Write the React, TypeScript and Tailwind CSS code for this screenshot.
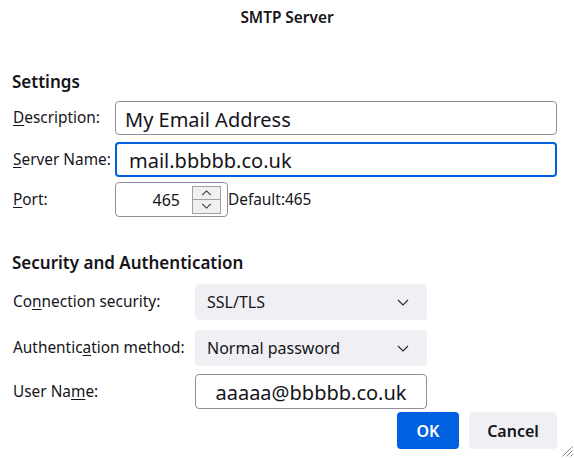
import React from "react";

function Chevron({ up = false, className = "" }: { up?: boolean; className?: string }) {
  return (
    <svg viewBox="0 0 12 7" className={className} fill="none" stroke="currentColor" strokeWidth={1.2}>
      {up ? <path d="M1 6 6 1l5 5" /> : <path d="M1 1l5 5 5-5" />}
    </svg>
  );
}

function Label({ text, u, className = "" }: { text: string; u: number; className?: string }) {
  return (
    <span className={`text-[15.4px] ${className}`}>
      {text.slice(0, u)}
      <span className="underline underline-offset-2">{text[u]}</span>
      {text.slice(u + 1)}
    </span>
  );
}

function Select({ value }: { value: string }) {
  return (
    <div className="flex h-[36px] w-[232px] items-center justify-between rounded-[4px] bg-[#f0f0f4] pl-[12px] pr-[18px] text-[16px]">
      <span>{value}</span>
      <Chevron className="h-[7px] w-[12px] text-[#2b2a33]" />
    </div>
  );
}

export default function App() {
  return (
    <div
      className="relative h-[458px] w-[574px] overflow-hidden bg-white text-[#15141a]"
      style={{ fontFamily: '"Noto Sans", "Open Sans", sans-serif' }}
    >
      <div className="flex h-[36px] items-center justify-center text-[15.4px] font-semibold">SMTP Server</div>

      <div className="px-[12px]">
        <h2 className="mt-[35px] text-[17px] leading-[22px] font-semibold">Settings</h2>

        <div className="mt-[8px] flex flex-col">
          <div className="flex items-center">
            <Label text="Description:" u={0} className="w-[103px] pl-[1px]" />
            <div className="mr-[5px] flex h-[34px] flex-1 items-center rounded-[4px] border border-[#8f8f9d] px-[9px] pt-[4px] text-[20px]">
              My Email Address
            </div>
          </div>
          <div className="mt-[7px] flex items-center">
            <Label text="Server Name:" u={0} className="w-[103px] pl-[1px]" />
            <div className="mr-[5px] flex h-[35px] flex-1 items-center rounded-[4px] border-2 border-[#0061e0] px-[12px] pt-[3px] text-[20px]">
              mail.bbbbb.co.uk
            </div>
          </div>
          <div className="mt-[5px] flex items-center">
            <Label text="Port:" u={0} className="w-[103px] pl-[1px]" />
            <div className="flex h-[35px] w-[113px] items-center justify-end rounded-[4px] border border-[#8f8f9d] pr-[6px]">
              <span className="mr-[12px] text-[16px]">465</span>
              <div className="flex h-[28px] w-[29px] flex-col border border-[#a0a0a0] bg-[#f0f0f0] text-[#333]">
                <div className="flex flex-1 items-center justify-center border-b border-[#a0a0a0]">
                  <Chevron up className="h-[6px] w-[11px]" />
                </div>
                <div className="flex flex-1 items-center justify-center">
                  <Chevron className="h-[6px] w-[11px]" />
                </div>
              </div>
            </div>
            <span className="text-[15.4px]">Default:465</span>
          </div>
        </div>

        <h2 className="mt-[35px] text-[17px] leading-[22px] font-semibold">Security and Authentication</h2>

        <div className="mt-[10px] flex flex-col">
          <div className="flex items-center">
            <Label text="Connection security:" u={2} className="w-[183px] pl-[1px]" />
            <Select value="SSL/TLS" />
          </div>
          <div className="mt-[10px] flex items-center">
            <Label text="Authentication method:" u={9} className="w-[183px] pl-[1px]" />
            <Select value="Normal password" />
          </div>
          <div className="mt-[8px] flex items-center">
            <Label text="User Name:" u={7} className="w-[183px] pl-[1px]" />
            <div className="flex h-[35px] w-[232px] items-center justify-center rounded-[4px] border border-[#8f8f9d] pt-[3px] text-[20px]">
              aaaaa@bbbbb.co.uk
            </div>
          </div>
        </div>

        <div className="mt-[3px] mr-[5px] flex justify-end gap-[10px]">
          <button className="h-[37px] w-[62px] rounded-[4px] bg-[#0061e0] text-[16px] font-semibold text-white">OK</button>
          <button className="h-[37px] w-[88px] rounded-[4px] bg-[#f0f0f4] text-[16px] font-semibold">Cancel</button>
        </div>
      </div>

      <svg className="absolute right-[1px] bottom-[1px] h-[11px] w-[11px]" viewBox="0 0 11 11" stroke="#888" strokeWidth={1}>
        <path d="M10.5 0.5 0.5 10.5M10.5 4.5 4.5 10.5M10.5 8.5 8.5 10.5" />
      </svg>
    </div>
  );
}
